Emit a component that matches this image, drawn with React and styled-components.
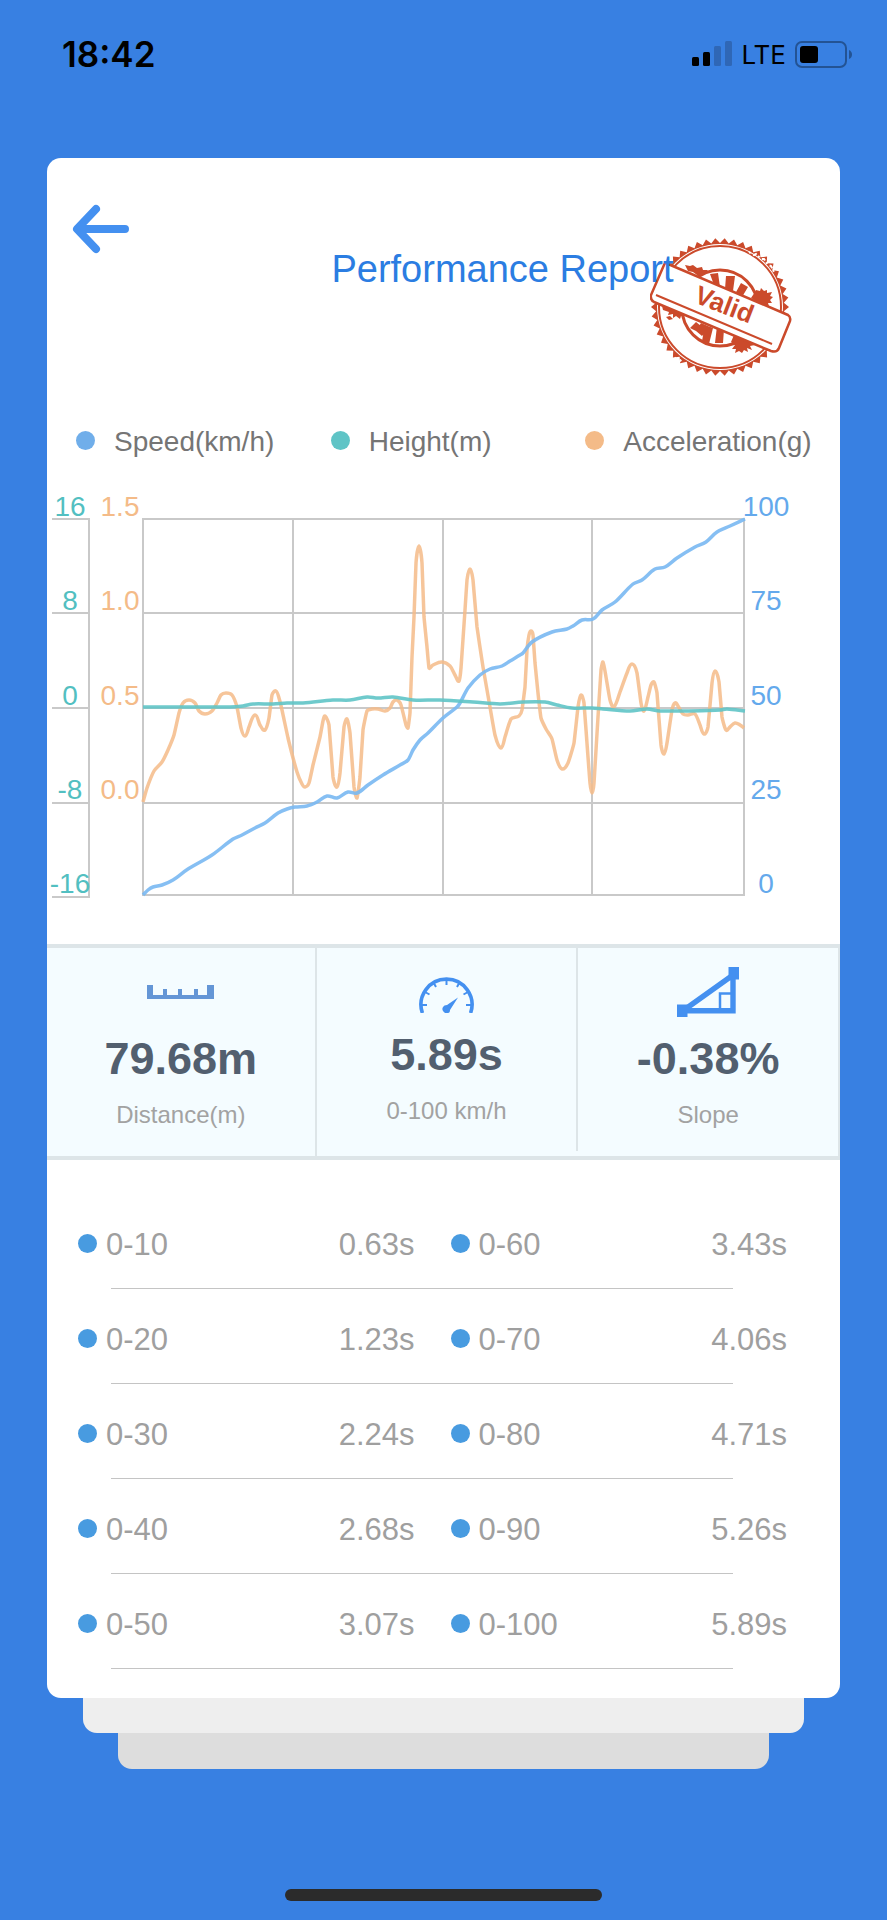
import React from 'react';
import styled, { createGlobalStyle } from 'styled-components';

const GlobalStyle = createGlobalStyle`
	* {
		box-sizing: border-box;
	}

	body {
		margin: 0;
		background: #3880e2;
		font-family: 'Liberation Sans', Arial, sans-serif;
	}
`;

const Page = styled.div`
	display: flex;
	flex-direction: column;
	min-height: 100vh;
	background: #3880e2;
`;

const StatusBar = styled.header`
	display: flex;
	justify-content: space-between;
	align-items: center;
	height: 108px;
	margin-bottom: 50px;
	padding: 0 34px 0 62px;
	color: #000;
	font-family: Inter, sans-serif;
`;

const Time = styled.time`
	font-size: 35px;
	font-weight: 600;
`;

const StatusIcons = styled.div`
	display: flex;
	align-items: center;
	gap: 9px;
	font-size: 26px;
	font-weight: 400;
`;

const Card = styled.main`
	position: relative;
	margin: 0 47px;
	border-radius: 14px;
	background: #fff;
`;

const CardHeader = styled.div`
	display: flex;
	align-items: flex-start;
	height: 260px;
`;

const BackButton = styled.button`
	width: 118px;
	padding: 46px 0 0 25px;
	border: 0;
	background: none;
	text-align: left;
	cursor: pointer;

	svg {
		display: block;
	}
`;

const Title = styled.h1`
	position: relative;
	z-index: 1;
	flex: 1;
	margin: 0;
	padding-top: 91px;
	color: #2b7de2;
	font-size: 38px;
	font-weight: 400;
	line-height: 40px;
	text-align: center;
`;

const Stamp = styled.svg`
	position: absolute;
	top: 80px;
	right: 48px;
`;

const Legend = styled.ul`
	display: grid;
	grid-template-columns: repeat(3, 1fr);
	margin: 0;
	padding: 0 0 0 29px;
	list-style: none;
`;

const LegendItem = styled.li`
	display: flex;
	align-items: center;
	gap: 19px;
	color: #757575;
	font-size: 28px;
	line-height: 48px;
	white-space: nowrap;
`;

const Dot = styled.span`
	flex: none;
	width: 19px;
	height: 19px;
	margin-bottom: 4px;
	border-radius: 50%;
	background: ${(props) => props.$color};
`;

const ChartBox = styled.svg`
	display: block;
	width: 100%;
	font-size: 28px;
	text-anchor: middle;
`;

const Stats = styled.section`
	display: grid;
	grid-template-columns: 34fr 33fr 33fr;
	border: solid #dde5e8;
	border-width: 4px 0;
	background: #f4fcff;
`;

const Stat = styled.div`
	display: flex;
	flex-direction: column;
	align-items: center;
	height: ${(props) => (props.$short ? 203 : 208)}px;
	padding-top: ${(props) => (props.$short ? 15 : 19)}px;
	border-right: 2px solid #dde5e8;
`;

const StatValue = styled.strong`
	margin-top: 19px;
	color: #525f6f;
	font-size: 45px;
	line-height: 45px;
`;

const StatLabel = styled.span`
	margin-top: 22px;
	color: #a2a2a2;
	font-size: 24px;
	line-height: 24px;
`;

const Times = styled.table`
	display: block;
	padding: 34px 0 29px;
	color: #9f9f9f;
	font-size: 31px;
	line-height: 30px;

	tbody {
		display: block;
	}
`;

const TimesRow = styled.tr`
	display: grid;
	grid-template-columns: 1fr 1fr 36px 1fr 1fr;
	padding: 36px 53px 0 31px;

	/* the rule is shorter than the row */
	&::after {
		content: '';
		grid-column: 1 / -1;
		height: 1px;
		margin: 28px 54px 0 33px;
		background: #c4c4c4;
	}
`;

const Range = styled.th`
	display: flex;
	align-items: center;
	gap: 9px;
	padding: 0;
	font-weight: 400;

	&:nth-child(3) {
		grid-column: 4;
	}
`;

const Seconds = styled.td`
	padding: 0;
	text-align: right;
`;

const Sheet = styled.div`
	height: ${(props) => props.$height}px;
	margin: 0 ${(props) => props.$inset}px;
	border-radius: 0 0 14px 14px;
	background: ${(props) => props.$color};
`;

const HomeIndicator = styled.div`
	width: 317px;
	height: 12px;
	margin: auto auto 19px;
	border-radius: 6px;
	background: #2b2b2b;
`;

const BLUE = '#70aeea';
const TEAL = '#5fc4c6';
const ORANGE = '#f4bb88';

const series = [
	{ name: 'Speed(km/h)', color: BLUE },
	{ name: 'Height(m)', color: TEAL },
	{ name: 'Acceleration(g)', color: ORANGE },
];

const accelerationPoints = [
	[0, 283], [4, 269], [11, 252], [19, 243], [25, 231], [31, 216], [36, 194],
	[40, 184], [46, 181], [52, 184], [56, 192], [62, 195], [69, 192], [74, 184],
	[78, 176], [83, 174], [89, 176], [94, 188], [98, 209], [102, 217], [106, 208],
	[112, 196], [117, 206], [122, 211], [126, 199], [129, 176], [133, 172],
	[136, 179], [139, 191], [145, 219], [154, 253], [159, 265], [162, 268],
	[166, 264], [170, 246], [177, 218], [180, 202], [182, 197], [186, 206],
	[190, 258], [194, 268], [197, 254], [201, 208], [204, 200], [207, 214],
	[211, 268], [214, 279], [217, 258], [220, 211], [224, 192], [229, 190],
	[235, 190], [242, 192], [247, 189], [250, 183], [254, 181], [258, 186],
	[263, 206], [265, 209], [267, 194], [269, 138], [271, 98], [273, 44],
	[276, 27], [279, 44], [281, 98], [284, 128], [286, 149], [290, 146],
	[299, 143], [307, 147], [312, 156], [316, 162], [318, 149], [322, 91],
	[324, 61], [327, 50], [330, 61], [334, 108], [340, 148], [347, 188],
	[352, 216], [358, 229], [362, 218], [368, 200], [376, 197], [379, 191],
	[382, 168], [384, 131], [386, 116], [388, 112], [390, 116], [392, 144],
	[395, 174], [398, 199], [403, 210], [409, 220], [414, 241], [419, 250],
	[425, 244], [431, 224], [435, 188], [438, 176], [441, 184], [445, 238],
	[447, 264], [449, 274], [451, 264], [455, 198], [458, 151], [460, 143],
	[463, 158], [467, 181], [471, 188], [477, 173], [484, 154], [489, 145],
	[494, 154], [498, 184], [501, 192], [505, 178], [508, 166], [511, 163],
	[514, 174], [518, 226], [521, 235], [524, 224], [529, 191], [532, 184],
	[535, 187], [540, 195], [545, 196], [552, 195], [557, 206], [561, 215],
	[565, 208], [569, 164], [572, 152], [576, 163], [579, 198], [583, 211],
	[587, 208], [592, 204], [597, 206], [601, 209],
];

const speedPoints = [
	[0, 376], [5, 371], [10, 368], [19, 366], [30, 361], [45, 350], [69, 336],
	[90, 320], [99, 316], [112, 309], [122, 304], [135, 294], [144, 290],
	[152, 288], [164, 287], [174, 283], [184, 277], [194, 279], [205, 273],
	[214, 274], [225, 266], [240, 256], [257, 246], [265, 241], [270, 231],
	[277, 221], [285, 214], [300, 199], [314, 188], [317, 184], [325, 169],
	[337, 156], [347, 150], [359, 147], [367, 142], [377, 136], [380, 134],
	[389, 123], [409, 113], [424, 110], [430, 107], [439, 101], [450, 100],
	[459, 91], [472, 83], [490, 65], [499, 61], [512, 50], [522, 48], [534, 39],
	[552, 28], [563, 23], [574, 13], [587, 7], [602, 0],
];

const heightPoints = [
	[0, 188], [87, 188], [100, 187], [110, 185], [130, 185], [144, 184],
	[160, 184], [190, 181], [207, 181], [224, 178], [235, 179], [250, 178],
	[270, 181], [297, 181], [330, 183], [357, 185], [380, 183], [402, 183],
	[414, 186], [429, 189], [449, 189], [460, 190], [487, 192], [504, 190],
	[517, 192], [577, 191], [584, 190], [602, 192],
];

// direction of the curve at point i, as a unit vector
const tangent = (points, i) => {
	const prev = points[i - 1] || points[i];
	const next = points[i + 1] || points[i];
	const dx = next[0] - prev[0];
	const dy = next[1] - prev[1];
	const length = Math.hypot(dx, dy);
	return [dx / length, dy / length];
};

const smooth = (points) => {
	let d = `M${points[0]}`;
	for (let i = 0; i < points.length - 1; i++) {
		const [x1, y1] = points[i];
		const [x2, y2] = points[i + 1];
		const [tx1, ty1] = tangent(points, i);
		const [tx2, ty2] = tangent(points, i + 1);
		// the handle stays short on steep parts so that the peaks keep their point
		const h = Math.min(Math.hypot(x2 - x1, y2 - y1) / 3, (x2 - x1) / 2);
		d += `C${x1 + tx1 * h} ${y1 + ty1 * h} ${x2 - tx2 * h} ${
			y2 - ty2 * h
		} ${x2} ${y2}`;
	}
	return d;
};

const ticks = [
	{ y: 50, height: '16', acceleration: '1.5', speed: '100' },
	{ y: 144, height: '8', acceleration: '1.0', speed: '75' },
	{ y: 239, height: '0', acceleration: '0.5', speed: '50' },
	{ y: 333, height: '-8', acceleration: '0.0', speed: '25' },
	{ y: 427, height: '-16', speed: '0' },
];

const times = [
	['0-10', '0.63s', '0-60', '3.43s'],
	['0-20', '1.23s', '0-70', '4.06s'],
	['0-30', '2.24s', '0-80', '4.71s'],
	['0-40', '2.68s', '0-90', '5.26s'],
	['0-50', '3.07s', '0-100', '5.89s'],
];

const SignalIcon = () => (
	<svg width="40" height="26" viewBox="0 0 40 26" aria-hidden="true">
		<rect x="0" y="16" width="7" height="9" rx="1.5" />
		<rect x="11" y="11" width="7" height="14" rx="1.5" />
		<rect x="22" y="5" width="7" height="20" rx="1.5" fill="#2f67b6" />
		<rect x="33" y="0" width="7" height="25" rx="1.5" fill="#2f67b6" />
	</svg>
);

const BatteryIcon = () => (
	<svg width="58" height="27" viewBox="0 0 58 27" aria-hidden="true">
		<rect
			x="1"
			y="1"
			width="50"
			height="25"
			rx="6"
			fill="none"
			stroke="#235394"
			strokeWidth="2"
		/>
		<rect x="5" y="5" width="18" height="17" rx="3" />
		<path d="M54 9q3 1.5 3 4.5t-3 4.5z" fill="#235394" />
	</svg>
);

const Chart = () => (
	<ChartBox
		viewBox="0 0 793 478"
		role="img"
		aria-label="Speed, height and acceleration over the run"
	>
		<g fill="none" stroke="#c9c9c9" strokeWidth="2">
			<path d="M5 53H42M5 147H42M5 242H42M5 337H42M5 431H43M42 52V431" />
			<path d="M96 53H697V429H96zM96 147H697M96 242H697M96 337H697" />
			<path d="M246 53V429M396 53V429M545 53V429" />
		</g>
		<g
			transform="translate(96 53)"
			fill="none"
			strokeWidth="3.5"
			strokeLinejoin="round"
		>
			<path d={smooth(accelerationPoints)} stroke={ORANGE} opacity="0.85" />
			<path d={smooth(speedPoints)} stroke="#79b8f2" opacity="0.9" />
			<path d={smooth(heightPoints)} stroke={TEAL} opacity="0.9" />
		</g>
		{ticks.map((tick) => (
			<g key={tick.y}>
				<text x="23" y={tick.y} fill="#52bfc1">
					{tick.height}
				</text>
				<text x="73" y={tick.y} fill={ORANGE}>
					{tick.acceleration}
				</text>
				<text x="719" y={tick.y} fill="#64a9ec">
					{tick.speed}
				</text>
			</g>
		))}
	</ChartBox>
);

const teeth = Array.from({ length: 92 }, (_, i) => {
	const angle = (i / 92) * Math.PI * 2;
	const r = i % 2 ? 64 : 69;
	return `${70 + r * Math.cos(angle)},${69 + r * Math.sin(angle)}`;
}).join(' ');

const ValidStamp = () => (
	<Stamp width="142" height="138" viewBox="0 0 142 138" fill="#cb4a2b">
		<polygon points={teeth} />
		<circle cx="70" cy="69" r="63" fill="#fff" />
		<circle cx="70" cy="69" r="61" fill="none" stroke="#cb4a2b" strokeWidth="2" />
		{/* worn part of the rim */}
		<path
			d="M99 14l5 3 2-1 5 5 3 0 4 6 3 1 3 6M21 116l5 5 4 1 5 5"
			fill="none"
			stroke="#fff"
			strokeWidth="2"
			strokeDasharray="2 3 4 2"
		/>
		<circle cx="70" cy="70" r="38" fill="none" stroke="#cb4a2b" strokeWidth="3" />
		<path d="M60 36l8-1 2 14-6-2zM76 38l9 0-2 15-8-2zM91 45l7 4-6 10-7-3zM46 84l5 4-5 5-6-3zM51 85l9 4-8 9-6-5zM55 87l8 3-4 16-7-3zM67 88l7 3-1 14-8 0z" />
		{/* ink smudges along the banner */}
		<path d="M35 27l5 1 3-1 4 3 5-1 1 3 5 0-6 6-5-1-4-3-5-1zM101 60l4-6 1-2 4 1 1-3 3 3 3-1 0 3 5-1-2 4 3 1-3 3 2 3-4 0 1 3-8-2zM12 68l8 2 4 0 8 3 4 5-5 0-1 3-4-3-3 2 0-4-5 1 1-3-6-2zM16 79l4-1 3 3-4 1zM84 97l6 1 7 3 3 4 5 2-5 1 2 4-5-2 1 4-4-2-2 3-3-2-4 2 1-4-4 0 3-4-4-3z" />
		<g stroke="#cb4a2b" strokeWidth="2.5" strokeLinejoin="round">
			<path
				d="M18 26Q15 24 14 27L1 57Q0 62 4 64L121 113Q127 115 129 110L140 83Q141 79 138 77z"
				fill="#fff"
			/>
			<path d="M6 57L122 106" strokeWidth="2" />
		</g>
		<text
			transform="translate(43 64) rotate(21)"
			fontSize="26"
			fontWeight="700"
		>
			Valid
		</text>
	</Stamp>
);

const RulerIcon = () => (
	<svg width="67" height="50" viewBox="0 0 67 50" aria-hidden="true">
		<path
			d="M0 18H6V28H16V22H20V28H31V22H35V28H47V22H51V28H60V18H67V32H0z"
			fill="#6496d6"
		/>
	</svg>
);

const GaugeIcon = () => (
	<svg width="55" height="50" viewBox="0 0 55 50" fill="none" aria-hidden="true">
		<path
			d="M3.4 50A25.5 25.5 0 1 1 51.6 50"
			stroke="#4490f0"
			strokeWidth="3.6"
		/>
		<path
			d="M3 42H8M6 29L10.5 31.5M14.5 19.5L17 24M27.5 17V22M40.5 19.5L38 24M49 29L44.5 31.5M52 42H47"
			stroke="#4490f0"
			strokeWidth="2"
		/>
		<path
			d="M39 34.5L31 47Q31 50 29 50H26Q22 47 24 44Q25 42 28 42z"
			fill="#4490f0"
		/>
	</svg>
);

const SlopeIcon = () => (
	<svg width="62" height="50" viewBox="0 0 62 50" aria-hidden="true">
		<path d="M0 37.5h10.5v12.5H0zM51.5 0H62v12.5H51.5z" fill="#4490f0" />
		<path
			d="M7 43L56 8V43.7H9"
			fill="none"
			stroke="#4490f0"
			strokeWidth="5.4"
		/>
		<path
			d="M55 26.5H43V42"
			fill="none"
			stroke="#4490f0"
			strokeWidth="2.5"
		/>
	</svg>
);

const App = () => {
	return (
		<>
			<GlobalStyle />
			<Page>
				<StatusBar>
					<Time>18:42</Time>
					<StatusIcons>
						<SignalIcon />
						<span>LTE</span>
						<BatteryIcon />
					</StatusIcons>
				</StatusBar>
				<Card>
					<CardHeader>
						<BackButton aria-label="Back">
							<svg width="58" height="50" viewBox="0 0 58 50">
								<path
									d="M53 25H6M24 5L5 25L24 45"
									fill="none"
									stroke="#4490f0"
									strokeWidth="8"
									strokeLinecap="round"
									strokeLinejoin="round"
								/>
							</svg>
						</BackButton>
						<Title>Performance Report</Title>
						<ValidStamp />
					</CardHeader>
					<Legend>
						{series.map((item) => (
							<LegendItem key={item.name}>
								<Dot $color={item.color} />
								{item.name}
							</LegendItem>
						))}
					</Legend>
					<Chart />
					<Stats>
						<Stat>
							<RulerIcon />
							<StatValue>79.68m</StatValue>
							<StatLabel>Distance(m)</StatLabel>
						</Stat>
						<Stat $short>
							<GaugeIcon />
							<StatValue>5.89s</StatValue>
							<StatLabel>0-100 km/h</StatLabel>
						</Stat>
						<Stat>
							<SlopeIcon />
							<StatValue>-0.38%</StatValue>
							<StatLabel>Slope</StatLabel>
						</Stat>
					</Stats>
					<Times>
						<tbody>
							{times.map(([low, lowTime, high, highTime]) => (
								<TimesRow key={low}>
									<Range scope="row">
										<Dot $color="#489be0" />
										{low}
									</Range>
									<Seconds>{lowTime}</Seconds>
									<Range scope="row">
										<Dot $color="#489be0" />
										{high}
									</Range>
									<Seconds>{highTime}</Seconds>
								</TimesRow>
							))}
						</tbody>
					</Times>
				</Card>
				<Sheet $height={35} $inset={83} $color="#eeeeee" />
				<Sheet $height={36} $inset={118} $color="#dddddd" />
				<HomeIndicator />
			</Page>
		</>
	);
};

export default App;
